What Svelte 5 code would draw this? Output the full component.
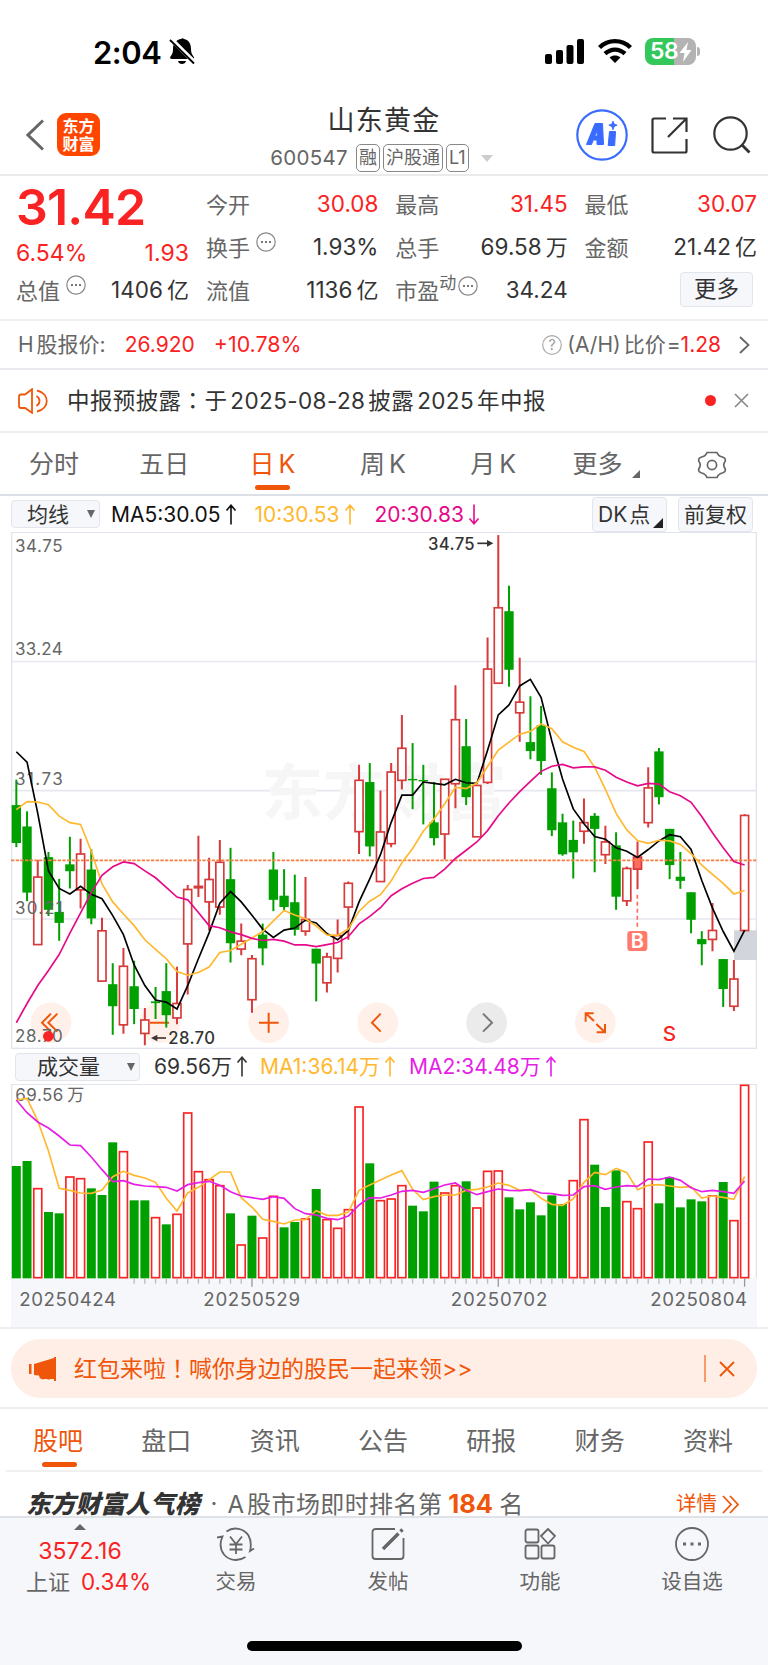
<script>
    // candles: [high, body top, body bottom, low], chart units
    const candles = [
        [752,826,936,948],[844,888,1080,1105],[985,1035,1231,1231],[962,977,1130,1148],[1040,1136,1168,1220],
        [918,998,1018,1068],[924,968,1072,1126],[954,1013,1155,1172],[1153,1191,1337,1337],[1285,1346,1410,1493],
        [1241,1294,1464,1490],[1278,1352,1418,1462],[1415,1450,1489,1523],[1354,1396,1401,1447],[1285,1366,1436,1472],
        [1295,1402,1444,1462],[1058,1071,1229,1376],[915,1062,1066,1093],[979,1042,1107,1190],[927,992,1122,1144],
        [950,1041,1227,1283],[1170,1221,1244,1262],[1261,1272,1391,1429],[1170,1202,1242,1291],[962,1013,1101,1134],
        [1012,1089,1122,1132],[1028,1108,1188,1205],[1035,1158,1192,1205],[1243,1243,1286,1396],[1255,1267,1342,1370],
        [1158,1205,1271,1312],[1048,1053,1122,1217],[709,754,903,968],[704,759,946,975],[784,904,1048,1048],
        [704,730,938,948],[564,661,754,781],[646,750,754,838],[709,753,757,882],[759,876,922,943],
        [751,751,910,984],[478,578,764,835],[576,655,803,826],[769,769,918,918],[339,431,760,765],
        [42,253,472,472],[189,263,433,482],[398,527,558,642],[510,643,669,693],[538,595,698,738],
        [731,777,899,916],[851,876,969,973],[871,927,963,1039],[807,877,902,938],[849,857,895,1021],
        [886,933,970,997],[905,943,1092,1130],[1004,1010,1104,1119],[932,977,1012,1070],[716,776,877,891],
        [660,670,803,824],[895,895,1000,1041],[962,1034,1046,1069],[1079,1079,1159,1198],[1192,1215,1230,1291],
        [1110,1190,1216,1250],[1273,1273,1360,1412],[1276,1331,1410,1424],[852,856,1190,1190]
    ];
    const downDays = [0,1,3,4,5,7,9,11,13,14,20,23,24,25,26,28,33,37,38,39,42,46,48,49,50,51,52,54,56,60,61,62,63,64,66];

    const ma5 = [671,701,850,1017,1068,1084,1062,1085,1098,1147,1202,1290,1350,1392,1398,1418,1350,1272,1197,1111,1077,1107,1146,1186,1210,1189,1183,1160,1168,1199,1217,1190,1107,1040,970,876,797,797,759,763,767,751,761,763,667,564,535,480,461,514,640,750,837,880,917,925,950,960,978,955,930,912,918,955,1045,1125,1193,1250,1190];
    const ma10 = [839,816,817,825,858,877,882,960,1055,1107,1142,1176,1217,1245,1272,1309,1320,1312,1296,1254,1248,1230,1212,1193,1162,1132,1145,1156,1177,1203,1204,1186,1134,1105,1086,1046,993,952,902,866,822,774,778,762,714,666,643,620,612,590,604,642,658,670,716,780,850,898,929,937,928,930,940,967,1000,1027,1053,1084,1074];
    const ma20 = [1458,1402,1350,1306,1260,1198,1139,1080,1030,1005,991,996,1017,1037,1065,1093,1101,1138,1176,1182,1194,1202,1213,1219,1216,1221,1232,1232,1237,1231,1225,1208,1171,1149,1124,1089,1069,1053,1039,1036,1012,981,957,933,900,857,820,787,757,728,713,708,718,715,715,725,745,759,770,763,765,787,799,818,859,906,950,990,1000];

    const volumes = [363,348,429,501,505,394,399,430,450,292,318,466,466,516,538,506,202,378,402,420,505,598,512,577,452,547,531,520,432,522,548,492,184,355,465,460,420,482,499,410,442,420,409,487,377,376,457,493,472,511,451,477,405,222,359,486,376,468,489,289,475,396,487,463,469,451,411,525,119];
    const volDown = [0,1,3,4,7,8,9,11,12,14,20,22,25,26,28,33,37,38,39,42,46,47,48,49,50,51,54,55,56,60,61,62,63,64,66];
    const vma1 = [165,160,228,318,430,436,444,445,435,395,379,391,399,412,460,498,444,427,404,381,381,458,486,523,529,537,525,524,497,511,511,501,436,420,405,390,377,433,464,455,450,450,436,433,426,414,421,436,434,460,478,481,462,412,382,389,370,383,434,421,419,423,427,425,459,453,457,463,395];
    const vma2 = [165,203,231,249,273,300,302,336,374,410,407,418,423,425,427,438,419,413,409,421,440,453,458,463,455,460,491,506,510,520,524,513,480,458,459,450,439,436,442,431,420,414,436,449,440,432,436,437,434,444,446,451,450,425,422,433,426,422,424,402,404,396,406,428,440,436,440,445,408];

    const cx = (i) => 49 + i * 32.13;
    const py = (y) => 33 + (y - 33) * 1.0332; // stretch prices to the frame height
    const line = (ys) => ys.map((y, i) => `${cx(i).toFixed(1)},${y}`).join(" ");

    const periods = ["分时", "五日", "日K", "周K", "月K"];
    const sections = ["股吧", "盘口", "资讯", "公告", "研报", "财务", "资料"];
    const levels = [["34.75", 92], ["33.24", 403], ["31.73", 791], ["30.21", 1178], ["28.70", 1564]];
    const dates = [["20250424", 60], ["20250529", 612], ["20250702", 1354], ["20250804", 1953]];
</script>

{#snippet dots()}
    <svg class="dots" width="20" height="20" viewBox="0 0 20 20">
        <circle cx="10" cy="10" r="9.2" fill="none" stroke="#888" stroke-width="1.2" />
        <path d="M5 10h2M9 10h2M13 10h2" stroke="#777" stroke-width="2" />
    </svg>
{/snippet}

{#snippet arrow(down)}
    <svg class="arrow" class:down width="12" height="21" viewBox="0 0 12 21" fill="none" stroke="currentColor" stroke-width="1.6">
        <path d="M6 20.5V1.500M1.500 6.500L6 1.200l4.500 5.300" />
    </svg>
{/snippet}

<main>
    <div class="status">
        <span class="time">2:04</span>
        <svg class="bell" width="26" height="28" viewBox="0 0 26 28">
            <path d="M13 1c-1.500-.9 1.400-1 2 0 5 1 7 5 7 10 0 4 1 5.500 2.500 7.500 1 1.500.5 2.500-1 2.500H3C1 21 .5 20 1.500 18.500 3.500 16 4 14 4 11 4 5.500 7 2 11.500 1z" />
            <path d="M9 23h8c-.7 4-7.300 4-8 0z" />
            <path d="M1.500.5l24 24" stroke="#fff" stroke-width="4.500" />
            <path d="M1 2l24 23.500" stroke="#000" stroke-width="1.800" />
        </svg>
        <span class="grow"></span>
        <svg class="signal" width="39" height="25" viewBox="0 0 39 25">
            <rect x="0" y="15" width="7" height="10" rx="2" /><rect x="11" y="11" width="7" height="14" rx="2" />
            <rect x="21.500" y="6" width="7" height="19" rx="2" /><rect x="32" y="0" width="7" height="25" rx="2" />
        </svg>
        <svg class="wifi" width="34" height="26" viewBox="1 0 34 26" fill="none" stroke="#000" stroke-width="4.400">
            <path d="M2.500 9.500C11 1 25 1 33.500 9.500" />
            <path d="M8 15.700c6-5.500 14-5.500 20 0" />
            <path d="M18 25l-5.400-5.500c3.400-2.600 7.400-2.600 10.800 0z" fill="#000" stroke="none" />
        </svg>
        <div class="battery">
            <span>58</span>
            <svg width="13" height="20" viewBox="0 0 12 20"><path d="M8.500 0L0 11h5l-1.500 9L12 8H7z" fill="#fff" /></svg>
        </div>
        <i class="nub"></i>
    </div>

    <header>
        <svg class="back" width="18" height="32" viewBox="0 0 18 32" fill="none" stroke="#666" stroke-width="3"><path d="M17 1.500L2 16l15 14.500" /></svg>
        <div class="logo"><span>东方</span><span>财富</span></div>
        <div class="title">
            <h1>山东黄金</h1>
            <p><b>600547</b><em>融</em><em>沪股通</em><em>L1</em><i></i></p>
        </div>
        <svg class="ai" width="52" height="52" viewBox="0 0 52 52">
            <circle cx="26" cy="26" r="24.700" fill="none" stroke="#3a6bff" stroke-width="2.200" />
            <path d="M10.500 35.500l8.500-21h7.500l1 21h-6.500v-4.500h-3.700L15.500 35.500zm8.200-8.500h2.500v-5z" fill="#3a6bff" stroke="#3a6bff" stroke-linejoin="round" fill-rule="evenodd" />
            <path d="M33.500 22.500h6l-.8 14h-6.500z" fill="#3a6bff" stroke="#3a6bff" stroke-linejoin="round" />
            <path d="M37 12l1.200 3 3 1.200-3 1.200-1.200 3.400-1.200-3.400-3-1.200 3-1.200z" fill="#3a6bff" stroke="#3a6bff" stroke-width=".8" />
        </svg>
        <svg class="share" width="37" height="37" viewBox="0 0 37 37" fill="none" stroke="#333" stroke-width="2.200">
            <path d="M15 1.500H3q-1.500 0-1.500 1.500v31q0 1.500 1.500 1.500h31q1.500 0 1.500-1.500V22M22 1.500h13.500V15M35 2L17 20" />
        </svg>
        <svg class="search" width="38" height="38" viewBox="0 0 38 38" fill="none" stroke="#333" stroke-width="2.200">
            <circle cx="17.500" cy="17.500" r="16.200" /><path d="M28.500 28.500l8 8" stroke-width="2.800" />
        </svg>
    </header>

    <section class="quote">
        <div class="main">
            <strong>31.42</strong>
            <div class="change red"><span>6.54%</span><span>1.93</span></div>
            <div class="cell"><label>总值{@render dots()}</label><span>1406<u>亿</u></span></div>
        </div>
        <div class="cells">
            <div class="cell"><label>今开</label><span class="red">30.08</span></div>
            <div class="cell"><label>最高</label><span class="red">31.45</span></div>
            <div class="cell"><label>最低</label><span class="red">30.07</span></div>
            <div class="cell"><label>换手{@render dots()}</label><span>1.93%</span></div>
            <div class="cell"><label>总手</label><span>69.58<u>万</u></span></div>
            <div class="cell"><label>金额</label><span>21.42<u>亿</u></span></div>
            <div class="cell"><label>流值</label><span>1136<u>亿</u></span></div>
            <div class="cell pe"><label>市盈<sup>动</sup>{@render dots()}</label><span>34.24</span></div>
            <div class="cell end"><button>更多</button></div>
        </div>
    </section>

    <section class="hshare">
        <span class="gray">H<u>股报价:</u></span>
        <span class="red hp">26.920</span>
        <span class="red hc">+10.78%</span>
        <span class="grow"></span>
        <svg width="20" height="20" viewBox="0 0 20 20"><circle cx="10" cy="10" r="9.300" fill="none" stroke="#aaa" stroke-width="1.200" /><text x="10" y="15" font-size="14" text-anchor="middle" fill="#999">?</text></svg>
        <span class="gray ratio">(A/H)<u>比价</u>=</span><span class="red ratio-n">1.28</span>
        <svg width="11" height="18" viewBox="0 0 11 18" fill="none" stroke="#666" stroke-width="1.800"><path d="M1 1l8.500 8L1 17" /></svg>
    </section>

    <section class="notice">
        <svg width="31" height="26" viewBox="0 0 31 26" fill="none" stroke="#f0560a" stroke-width="1.800">
            <path d="M14 1.200v23.600L7 20H3q-2 0-2-2V8.500q0-2 2-2h4z" /><path d="M18.500 8c4 2.500 4 7.500 0 10M19 2.500c13 3 13 18 0 21" />
        </svg>
        <p>中报预披露<span class="punct">：</span>于<b>2025-08-28</b>披露<b>2025</b>年中报</p>
        <i></i>
        <svg width="15" height="15" viewBox="0 0 15 15" stroke="#888" stroke-width="1.600"><path d="M1 1l13 13M14 1L1 14" /></svg>
    </section>

    <nav class="periods">
        {#each periods as p}
            <span class:active={p === "日K"}>{p[0]}<b class:k={p[1] === "K"}>{p[1]}</b></span>
        {/each}
        <span class="more">更多<i></i></span>
        <svg width="30" height="28" viewBox="0 0 30 28" fill="none" stroke="#666" stroke-width="1.700">
            <path d="M10 1.500h10q1.500 3.800 5.500 4.500 4 1.500 2.500 4.500-2.500 3.500 0 7 1.500 3-2.500 4.500-4 .7-5.500 4.500H10Q8.500 22.700 4.500 22 .5 20.500 2 17.500q2.500-3.500 0-7Q.5 7.500 4.500 6 8.500 5.300 10 1.500z" />
            <circle cx="15" cy="14" r="4.600" />
        </svg>
    </nav>

    <div class="ma">
        <span class="select s1">均线<i></i></span>
        <span class="m5">MA5:30.05{@render arrow(false)}</span>
        <span class="m10">10:30.53{@render arrow(false)}</span>
        <span class="m20">20:30.83{@render arrow(true)}</span>
        <span class="grow"></span>
        <span class="tool dk">DK<u>点</u><i></i></span>
        <span class="tool">前复权</span>
    </div>

    <svg class="kline" width="746" height="517" viewBox="33 33 2238 1551">
        <rect x="35" y="34" width="2234" height="1548" fill="none" stroke="#e1e4ec" stroke-width="4" />
        <path d="M33 421.500H2271M33 809H2271M33 1194H2271" stroke="#e5e8ef" stroke-width="5" />
        <text class="mark" x="785" y="882" textLength="735">东方财富</text>
        <g class="controls" transform="translate(0 47)">
            <circle cx="153" cy="1458" r="61" /><circle cx="480" cy="1458" r="61" /><circle cx="806" cy="1458" r="61" />
            <circle cx="1133" cy="1458" r="61" /><circle cx="1460" cy="1458" r="61" class="off" /><circle cx="1786" cy="1458" r="61" />
            <path d="M153 1431l-27 27 27 27M172 1431l-27 27 27 27M450 1458h57M777 1458h59M806 1428v60M1142 1431l-26 27 26 27M1757 1455v-25h24M1757 1430l25 23M1815 1462v25h-25M1815 1487l-26-25" />
            <path d="M1449 1431l27 27-27 27" class="off-icon" />
        </g>
        <rect x="2202" y="1228" width="69" height="89" fill="#d2d5dc" />
        {#each candles.map((c) => c.map(py)) as [h, t, b, l], i}
            {#if downDays.includes(i)}
                <path d="M{cx(i)} {h}V{l}" stroke="#00a000" stroke-width="6" />
                <rect x={cx(i) - 14} y={t} width="28" height={b - t} fill="#00a000" />
            {:else}
                <path d="M{cx(i)} {h}V{t}M{cx(i)} {b}V{l}" stroke="#d63a3a" stroke-width="6" />
                <rect x={cx(i) - 12} y={t} width="24" height={b - t} fill={i === 58 ? "#ff6b5c" : "#fff"} stroke="#d63a3a" stroke-width="5" />
            {/if}
        {/each}
        {#each levels as [t, y]}
            <text class="level" x="45" {y} textLength="143">{t}</text>
        {/each}
        <circle cx="145" cy="1546" r="16" fill="#fa2323" />
        <path d="M33 1018H2271" stroke="#f77f42" stroke-width="5" stroke-dasharray="10 4" />
        <polyline points={line(ma5.map(py))} stroke="#000" />
        <polyline points={line(ma10.map(py))} stroke="#ffb82e" />
        <polyline points={line(ma20.map(py))} stroke="#e60a8a" />
        <path d="M1912 1121v99" stroke="#ff6b5c" stroke-width="5" stroke-dasharray="12 9" />
        <rect x="1882" y="1230" width="60" height="60" rx="10" fill="#ff7a6b" />
        <text x="1912" y="1281" class="buy">B</text>
        <text x="2008" y="1560" class="sell">S</text>
        <text x="1284" y="86" class="peak" textLength="140">34.75</text>
        <path d="M1432 67h34" stroke="#333" stroke-width="5" /><path d="M1461 57l19 10-19 10z" fill="#333" />
        <text x="505" y="1570" class="peak" textLength="140">28.70</text>
        <path d="M467 1551h31" stroke="#433" stroke-width="5" /><path d="M472 1541l-19 10 19 10z" fill="#433" />
    </svg>

    <div class="ma vol">
        <span class="select s2">成交量<i></i></span>
        <span class="v0">69.56万{@render arrow(false)}</span>
        <span class="v1">MA1:36.14万{@render arrow(false)}</span>
        <span class="v2">MA2:34.48万{@render arrow(false)}</span>
    </div>

    <svg class="volume" width="746" height="243" viewBox="33 117 2238 729">
        <rect x="33" y="699" width="2238" height="150" fill="#f6f7fa" />
        <path d="M35 699V118H2269V699" fill="none" stroke="#e1e4ec" stroke-width="4" />
        {#each volumes as v, i}
            {#if volDown.includes(i)}
                <rect x={cx(i) - 13.5} y={v} width="27" height={700 - v} fill="#00a000" />
            {:else}
                <rect x={cx(i) - 12} y={v + 2} width="24" height={696 - v} fill="#fff" stroke="#fa2323" stroke-width="5" />
            {/if}
            {#if i > 10}
                <path d="M{cx(i)} 700V{i === 22 || i === 45 || i === 68 ? 725 : 716}" stroke={i === 22 || i === 45 || i === 68 ? "#999" : "#bbb"} stroke-width="4" />
            {/if}
        {/each}
        <text class="level" x="46" y="169"><tspan textLength="144">69.56</tspan><tspan x="202">万</tspan></text>
        <polyline points={line(vma1)} stroke="#ffb82e" />
        <polyline points={line(vma2)} stroke="#e61ee6" />
        {#each dates as [d, x]}
            <text class="date" x={x - 2} y="783" textLength="290">{d}</text>
        {/each}
    </svg>

    <div class="promo">
        <div class="pill">
            <svg width="28" height="24" viewBox="0 0 28 24" fill="#f0560a"><path d="M0 7h2.500v10H0zM5 7L25 1V0h2v24h-2v-2h-4v0q-1 1-3 0h-3q-1.500 1-3-.5h-1l-1-3-5-.5z" /></svg>
            <span>红包来啦<b class="punct">！</b>喊你身边的股民一起来领&gt;&gt;</span>
            <i></i>
            <svg width="16" height="16" viewBox="0 0 16 16" stroke="#f0560a" stroke-width="1.800"><path d="M1 1l14 14M15 1L1 15" /></svg>
        </div>
    </div>

    <nav class="sections">
        {#each sections as s, i}
            <span class:active={i === 0}>{s}</span>
        {/each}
    </nav>

    <div class="rank">
        <strong>东方财富人气榜</strong><b>·</b>
        <span>A<u>股市场即时排名第</u><em>184</em><u>名</u></span>
        <a href="#top">详情<svg width="17" height="19" viewBox="0 0 17 19" fill="none" stroke="#f0560a" stroke-width="1.800"><path d="M1 1l8 8.500L1 18M8 1l8 8.500L8 18" /></svg></a>
    </div>

    <footer>
        <div class="index">
            <i></i>
            <span class="red">3572.16</span>
            <p>上证<span class="red">0.34%</span></p>
        </div>
        <div class="item">
            <svg width="38" height="35" viewBox="0 0 38 35">
                <path d="M9.500 4.500C17-1 27 1.500 31.500 8.500 34 13 34.500 18 33 24l4-2.500M28.500 30C21 35 12 33.500 7 27.500 2.500 21.500 3 15 5.500 9.500L0 10.500" />
                <path d="M13 9.500l6 7.500 6-7.500M12.500 17.500h13M12.500 22.500h13M19 17v10" />
            </svg>
            <span>交易</span>
        </div>
        <div class="item">
            <svg width="34" height="35" viewBox="0 0 34 35"><path d="M24 2H5Q1.500 2 1.500 5v24q0 3 3 3h25q3 0 3-3V11" /><path d="M12 22L27.500 6.500M29.500 4.500l2-2" stroke-width="3.400" /></svg>
            <span>发帖</span>
        </div>
        <div class="item">
            <svg width="32" height="35" viewBox="0 0 32 35"><rect x="1.500" y="2.500" width="13" height="13" rx="2" /><rect x="1.500" y="18.500" width="13" height="13" rx="2" /><rect x="17.500" y="18.500" width="13" height="13" rx="2" /><path d="M24 2l7 7-7 7.500L17 9z" stroke-linejoin="round" /></svg>
            <span>功能</span>
        </div>
        <div class="item">
            <svg width="34" height="35" viewBox="0 0 34 35"><circle cx="17" cy="17" r="16" /><path d="M8 17h3M15.500 17h3M23 17h3" stroke-width="3" /></svg>
            <span>设自选</span>
        </div>
        <div class="home"></div>
    </footer>
</main>

<style>
    :global(body) {background: #fff;}
    * {box-sizing: border-box;}

    main {
        width: 768px; height: 1665px;
        overflow: hidden;
        font-family: Inter, "Noto Sans CJK SC", sans-serif;
        font-size: 22px;
        line-height: 1;
        color: #333;
    }
    svg {display: block; flex: none;}
    h1, p {margin: 0; font-weight: 400;}
    b, em, u, label {font-weight: 400; font-style: normal; text-decoration: none;}
    span, label {white-space: nowrap;}
    .red {color: #fa2323;}
    .gray {color: #666;}
    .grow {flex: 1;}
    .punct {font-family: "Noto Sans CJK TC", sans-serif;}

    .status {display: flex; align-items: flex-start; height: 105px; padding: 37px 68px 0 93px;}
    .time {width: 70px; font-size: 31px; font-weight: 600; letter-spacing: -0.5px; color: #000; line-height: 31px;}
    .bell {margin: 1px 0 0 6px;}
    .signal {margin: 2px 14px 0 0;}
    .wifi {margin: 1px 13px 0 0;}
    .battery {
        display: flex; align-items: center; gap: 1px;
        width: 51px; height: 27px; margin-top: 1px; padding-left: 5px;
        border-radius: 8px;
        background: linear-gradient(90deg, #34c759 57%, #b3b3b3 57%);
        color: #fff; font-size: 23px; font-weight: 600;
    }
    .battery span {letter-spacing: -0.5px;}
    .nub {width: 3px; height: 9px; margin: 10px 0 0 1px; border-radius: 0 4px 4px 0; background: #b3b3b3;}

    header {display: flex; height: 71px; padding-left: 26px; border-bottom: 2px solid #ebebed;}
    .back {margin-top: 14px;}
    .logo {
        display: flex; flex-direction: column; align-items: center; justify-content: center; gap: 2px;
        width: 43px; height: 43px; margin: 8px 0 0 13px;
        border-radius: 9px; background: #ff4600; color: #fff;
        font-size: 16px; font-weight: 700;
    }
    .title {flex: 1; display: flex; flex-direction: column; align-items: center; padding-left: 92px;}
    .title h1 {font-size: 27px; margin-top: 2px; letter-spacing: 1.2px;}
    .title p {display: flex; align-items: center; margin: 10px 0 0 -5px; color: #666; gap: 3px;}
    .title p b {font-size: 20.5px; letter-spacing: 0.3px; margin-right: 5px;}
    .title em {display: flex; align-items: center; height: 28px; padding: 0 2px; border: 1.5px solid #888; border-radius: 5px; font-size: 18px;}
    .title p i {margin-left: 9px; border: 6px solid transparent; border-top: 7px solid #ccc; border-bottom: 0;}
    .ai {margin: 4px 23px 0 0;}
    .share {margin: 12px 25px 0 0;}
    .search {margin: 11px 17px 0 0;}

    .quote {display: flex; height: 145px; padding: 7px 11px 0 16px; border-bottom: 2px solid #f0f0f3;}
    .main {width: 173px; margin-right: 17px;}
    .main strong {display: block; height: 49px; line-height: 49px; font-size: 50px; font-weight: 600; letter-spacing: -0.8px; color: #fa2323;}
    .change {display: flex; justify-content: space-between; height: 37px; align-items: center; padding-top: 5px; font-size: 23px;}
    .cells {flex: 1; display: grid; grid-template-columns: repeat(3, 172.5px); grid-auto-rows: 43px; column-gap: 16.8px;}
    .cell {display: flex; justify-content: space-between; align-items: center; height: 43px; font-size: 22.5px;}
    .cell label {display: flex; font-size: 22px; color: #666;}
    .cell .dots {margin: -5px 0 0 6px;}
    .cell u {margin-left: 4px; font-size: 22px;}
    .cell sup {font-size: 17px; margin-top: -5px; line-height: 17px;}
    .pe .dots {margin: -4px 0 0 2px;}
    .cell.end {justify-content: flex-end; padding-right: 4px;}
    button {width: 73px; height: 35px; margin-top: -3px; padding: 0; border: 1.5px solid #e2e5ec; border-radius: 4px; background: #f6f7fa; font: inherit; color: #333;}

    .hshare {display: flex; align-items: center; height: 49px; padding: 0 18px 0 18px; border-bottom: 2px solid #e9e9ee; font-size: 21px;}
    .hshare u {margin: 0 1px 0 3px;}
    .hp {margin-left: 18px;}
    .hc {margin-left: 19px; font-size: 21.4px;}
    .ratio {margin-left: 5px;}
    .ratio-n {margin-right: 18px;}

    .notice {display: flex; align-items: center; height: 63px; padding: 0 19px 0 18px; border-bottom: 2px solid #eeeef0;}
    .notice p {flex: 1; margin-left: 18px; font-size: 22.5px; letter-spacing: 0.4px; white-space: nowrap;}
    .notice b {margin: 0 3px;}
    .notice i {width: 11px; height: 11px; margin-right: 18px; border-radius: 50%; background: #fa2323;}

    .periods {display: flex; align-items: center; height: 63px; padding: 2px 0 0 29px; border-bottom: 2px solid #dddfe6; font-size: 25px; color: #666;}
    .periods span {position: relative; width: 110.3px;}
    .periods b.k {margin-left: 4px;}
    .periods .more {width: 125px; margin-left: -8px;}
    .periods .more i {position: absolute; left: 60px; bottom: -1px; border: 4px solid #666; border-top-color: transparent; border-left-color: transparent;}
    .active {color: #f0560a;}
    .active::after {content: ""; position: absolute; left: 5px; bottom: -13px; width: 35px; height: 5px; border-radius: 3px; background: #f0560a;}

    .ma {display: flex; align-items: center; height: 36px; padding: 0 15px 0 11px; font-size: 21px;}
    .ma span {display: flex; align-items: center;}
    .arrow {margin-left: 4px;}
    .arrow.down {transform: scaleY(-1);}
    .ma .select, .ma .tool {position: relative; height: 28px; border: 1.5px solid #e2e5ec; border-radius: 4px; background: #f6f7fa;}
    .select i {position: absolute; right: 4px; top: 9px; border: 4.5px solid transparent; border-top: 8px solid #666; border-bottom: 0;}
    .s1 {width: 89px; padding-left: 15px;}
    .s2 {width: 125px; padding-left: 21px;}
    .ma .tool {width: 75px; height: 35px; padding: 0 0 0 5px; margin-left: 11px;}
    .ma .dk {margin-left: 0;}
    .tool u {margin-left: 2px;}
    .tool i {position: absolute; right: 3px; bottom: 3px; border: 5px solid #222; border-top-color: transparent; border-left-color: transparent;}
    .m5 {margin-left: 11px; color: #111;}
    .m10 {margin-left: 18px; color: #ffb82e;}
    .m20 {margin-left: 19px; color: #e60a8a;}
    .vol {height: 35px; padding-left: 15px;}
    .v0 {margin-left: 14px;}
    .v1 {margin-left: 12px; color: #ffb82e;}
    .v2 {margin-left: 13px; color: #e61ee6;}

    .kline, .volume {margin-left: 11px;}
    polyline {fill: none; stroke-width: 5;}
    .level {font-size: 51px; fill: #666;}
    .date {font-size: 56px; fill: #666;}
    .mark {font-size: 184px; font-weight: 700; fill: #f6f6f6;}
    .peak {font-size: 50px; font-weight: 500; fill: #333;}
    .buy {font-size: 60px; font-weight: 600; fill: #fff; text-anchor: middle;}
    .sell {font-size: 62px; font-weight: 500; fill: #fa2323; text-anchor: middle;}
    .controls circle {fill: #fff1e9;}
    .controls circle.off {fill: #ebebeb;}
    .controls path {fill: none; stroke: #f0560a; stroke-width: 6;}
    .controls .off-icon {stroke: #777;}

    .promo {height: 82px; padding: 10px 11px 0; border-top: 2px solid #eeeef0; border-bottom: 2px solid #eeeef0;}
    .pill {display: flex; align-items: center; height: 59px; padding: 0 22px 0 18px; border-radius: 30px; background: #feeee6; color: #f0560a; font-size: 23px;}
    .pill span {flex: 1; margin-left: 17px;}
    .pill i {width: 2px; height: 27px; margin-right: 13px; background: #f59a6b;}

    .sections {display: flex; align-items: center; justify-content: space-between; height: 63px; margin: 0 6px; padding: 4px 29px 0 27px; border-bottom: 2px solid #f0f0f0; font-size: 25px; color: #666;}
    .sections span {position: relative;}
    .sections .active::after {left: 9px;}

    .rank {display: flex; align-items: center; height: 44px; padding: 20px 29px 0 26px; font-size: 24px; color: #666;}
    .rank strong {font-size: 24.8px; font-weight: 900; font-style: italic; color: #333; white-space: nowrap;}
    .rank b {margin: 0 10px 0 11px;}
    .rank span {flex: 1;}
    .rank u {margin-left: 3px; letter-spacing: 0.4px;}
    .rank em {margin: 0 3px 0 6px; font-size: 25.5px; font-weight: 700; color: #f0560a; line-height: 24px;}
    .rank a {display: flex; align-items: center; gap: 5px; color: #f0560a; font-size: 20.5px; text-decoration: none;}

    footer {position: relative; display: flex; height: 149px; border-top: 2px solid #e0e2ea; background: #f6f7fa; color: #666;}
    .index {width: 160px; display: flex; flex-direction: column; align-items: center; padding-top: 6px;}
    .index i {border: 6px solid transparent; border-bottom: 6px solid #666; border-top: 0;}
    .index > span {margin-top: 10px; font-size: 23px;}
    .index p {display: flex; margin-top: 8px; padding-left: 17px; gap: 11px;}
    .index p span {font-size: 22.5px;}
    .item {width: 152px; display: flex; flex-direction: column; align-items: center; padding-top: 9px; font-size: 20.5px;}
    .item svg {fill: none; stroke: #666; stroke-width: 1.8;}
    .item span {margin-top: 10px;}
    .home {position: absolute; left: 247px; top: 123px; width: 275px; height: 10px; border-radius: 5px; background: #000;}
</style>
